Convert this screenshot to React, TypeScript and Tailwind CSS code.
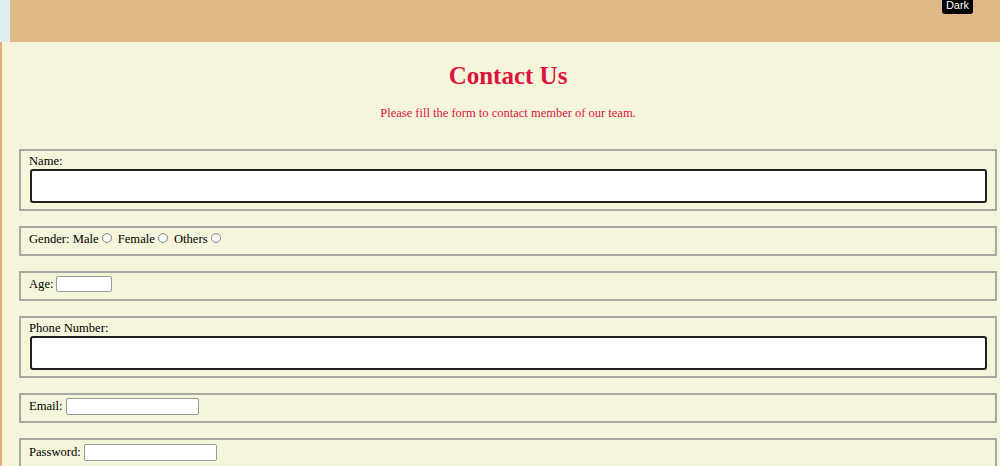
import React from 'react';

const serif = { fontFamily: '"Liberation Serif", "Times New Roman", serif' };

const Radio: React.FC = () => (
  <span className="inline-block w-[10px] h-[10px] rounded-full border border-[#858585] bg-[#fafafa] mx-[3px] relative top-[-2px] align-middle" />
);

const BigInput: React.FC = () => (
  <div className="ml-px h-[34px] bg-white border-2 border-[#1f1f1f] rounded-[3px]" />
);

const Field: React.FC<{ children: React.ReactNode; className?: string }> = ({ children, className }) => (
  <fieldset className={`border-2 border-[#a8a8a2] pl-[8px] pr-[8px] ${className ?? ''}`}>
    {children}
  </fieldset>
);

export default function App() {
  return (
    <div className="w-[1000px] h-[466px] overflow-hidden bg-[#dfeef0] text-[12.6px] text-black" style={serif}>
      <header className="ml-[10px] h-[42px] bg-[#deb887] flex justify-end items-start pr-[27px]">
        <button
          className="relative -top-[5px] h-[19px] w-[31px] bg-black text-white rounded-[3px] text-[11px] leading-[12px] flex items-center justify-center"
          style={{ fontFamily: '"Liberation Sans", Arial, sans-serif' }}
        >
          Dark
        </button>
      </header>

      <main className="bg-[#f5f5dc] border-l-2 border-[#e6ad78] pl-[17px] pr-[3px] h-[424px] flex flex-col">
        <h1 className="mt-[19px] text-center font-bold text-[25px] leading-[29px] text-[#dc143c]">Contact Us</h1>
        <p className="mt-[16px] text-center text-[12.5px] leading-[15px] text-[#dc143c]">
          Please fill the form to contact member of our team.
        </p>

        <div className="mt-[28px] flex flex-col gap-[15px]">
          <Field className="pt-[3px] pb-[6px]">
            <div className="leading-[15px]">Name:</div>
            <BigInput />
          </Field>

          <Field className="pt-[4px] pb-[7px]">
            <div className="leading-[15px]">
              Gender: Male<Radio /> Female<Radio /> Others<Radio />
            </div>
          </Field>

          <Field className="pt-[3px] pb-[7px]">
            <div className="flex items-center h-[16px] gap-[3px]">
              <span>Age:</span>
              <div className="w-[56px] h-[16px] bg-white border border-[#9a9a9a] rounded-[2px]" />
            </div>
          </Field>

          <Field className="pt-[3px] pb-[6px]">
            <div className="leading-[15px]">Phone Number:</div>
            <BigInput />
          </Field>

          <Field className="pt-[3px] pb-[6px]">
            <div className="flex items-center h-[17px] gap-[3px]">
              <span>Email:</span>
              <div className="w-[133px] h-[17px] bg-white border border-[#9a9a9a] rounded-[2px]" />
            </div>
          </Field>

          <Field className="pt-[4px] pb-[6px]">
            <div className="flex items-center h-[17px] gap-[3px]">
              <span>Password:</span>
              <div className="w-[133px] h-[17px] bg-white border border-[#9a9a9a] rounded-[2px]" />
            </div>
          </Field>
        </div>
      </main>
    </div>
  );
}
